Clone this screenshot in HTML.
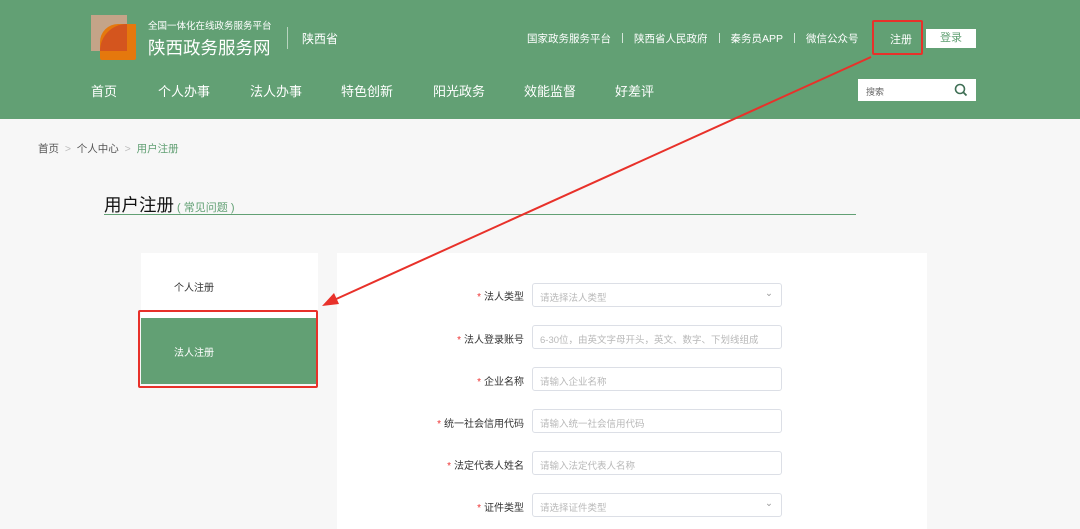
<!DOCTYPE html><html><head><meta charset="utf-8"><style>
*{margin:0;padding:0;box-sizing:border-box}
body{width:1080px;height:529px;overflow:hidden;background:#f7f7f7;font-family:"Liberation Sans","Noto Sans CJK SC",sans-serif;position:relative}
.hd{position:absolute;left:0;top:0;width:1080px;height:119px;background:#62a074;color:#fff}
.a{position:absolute;white-space:nowrap}
.nav{font-size:13px;top:81px}
.lab{position:absolute;right:556px;font-size:10px;color:#333;white-space:nowrap}
.lab b{color:#e33;font-weight:normal;margin-right:3px}
.in{position:absolute;left:532px;width:250px;height:24px;border:1px solid #dcdfe6;border-radius:3px;background:#fff;font-size:9.5px;color:#b8b8b8;padding:6px 0 0 7px}
.sep{display:inline-block;width:1px;height:10px;background:#d5e6da;margin:0 11px;vertical-align:-1px}
</style></head><body>
<div class="hd">
<div class="a" style="left:91px;top:15px;width:36px;height:36px;background:#c4a488"></div>
<div class="a" style="left:100px;top:24px;width:36px;height:36px;background:#e5780d;border-radius:18px 0 2px 2px"></div>
<div class="a" style="left:100px;top:24px;width:27px;height:27px;background:#d4551e;border-radius:27px 0 0 0"></div>
<div class="a" style="left:148px;top:18px;font-size:9.5px">全国一体化在线政务服务平台</div>
<div class="a" style="left:148px;top:35px;font-size:17.5px">陕西政务服务网</div>
<div class="a" style="left:287px;top:27px;width:1px;height:22px;background:#b8d4bf"></div>
<div class="a" style="left:302px;top:30px;font-size:12px">陕西省</div>
<div class="a" style="left:527px;top:31px;font-size:10.5px">国家政务服务平台<span class="sep"></span>陕西省人民政府<span class="sep"></span>秦务员APP<span class="sep"></span>微信公众号</div>
<div class="a" style="left:890px;top:31px;font-size:11px">注册</div>
<div class="a" style="left:872px;top:20px;width:51px;height:35px;border:2px solid #e8312a;border-radius:2px"></div>
<div class="a" style="left:926px;top:29px;width:50px;height:19px;background:#fff;color:#62a074;font-size:11px;text-align:center;line-height:19px">登录</div>
<div class="a nav" style="left:91px">首页</div>
<div class="a nav" style="left:158px">个人办事</div>
<div class="a nav" style="left:250px">法人办事</div>
<div class="a nav" style="left:341px">特色创新</div>
<div class="a nav" style="left:433px">阳光政务</div>
<div class="a nav" style="left:524px">效能监督</div>
<div class="a nav" style="left:615px">好差评</div>
<div class="a" style="left:858px;top:79px;width:118px;height:22px;background:#fff;color:#666;font-size:9px;padding:6px 8px">搜索
<svg style="position:absolute;right:8px;top:4px" width="14" height="14" viewBox="0 0 14 14"><circle cx="6" cy="6" r="4.5" fill="none" stroke="#3f6f55" stroke-width="1.6"/><path d="M9.3 9.3L12.5 12.5" stroke="#3f6f55" stroke-width="1.8"/></svg></div>
</div>
<div class="a" style="left:38px;top:141px;font-size:10.5px;color:#555">首页 <span style="color:#bbb">&nbsp;&gt;&nbsp;</span> 个人中心 <span style="color:#bbb">&nbsp;&gt;&nbsp;</span> <span style="color:#62a074">用户注册</span></div>
<div class="a" style="left:104px;top:192px;font-size:17.5px;color:#111">用户注册<span style="font-size:11px;color:#62a074"> ( 常见问题 )</span></div>
<div class="a" style="left:104px;top:214px;width:752px;height:1px;background:#62a074"></div>
<div class="a" style="left:141px;top:253px;width:177px;height:131px;background:#fff"></div>
<div class="a" style="left:174px;top:279px;font-size:10px;color:#333">个人注册</div>
<div class="a" style="left:141px;top:318px;width:175px;height:66px;background:#62a074"></div>
<div class="a" style="left:174px;top:344px;font-size:10px;color:#fff">法人注册</div>
<div class="a" style="left:138px;top:310px;width:180px;height:78px;border:2px solid #e8312a;border-radius:2px"></div>
<div class="a" style="left:337px;top:253px;width:590px;height:276px;background:#fff"></div>
<div class="lab" style="top:288px"><b>*</b>法人类型</div><div class="in" style="top:283px">请选择法人类型<span style="position:absolute;right:8px;top:4px;color:#999">⌄</span></div>
<div class="lab" style="top:331px"><b>*</b>法人登录账号</div><div class="in" style="top:325px">6-30位，由英文字母开头，英文、数字、下划线组成</div>
<div class="lab" style="top:373px"><b>*</b>企业名称</div><div class="in" style="top:367px">请输入企业名称</div>
<div class="lab" style="top:415px"><b>*</b>统一社会信用代码</div><div class="in" style="top:409px">请输入统一社会信用代码</div>
<div class="lab" style="top:457px"><b>*</b>法定代表人姓名</div><div class="in" style="top:451px">请输入法定代表人名称</div>
<div class="lab" style="top:499px"><b>*</b>证件类型</div><div class="in" style="top:493px">请选择证件类型<span style="position:absolute;right:8px;top:4px;color:#999">⌄</span></div>
<svg class="a" style="left:0;top:0" width="1080" height="529"><line x1="871" y1="57" x2="334" y2="300" stroke="#e8312a" stroke-width="2"/><path d="M322 306L334 293L339 304Z" fill="#e8312a"/></svg>
</body></html>
